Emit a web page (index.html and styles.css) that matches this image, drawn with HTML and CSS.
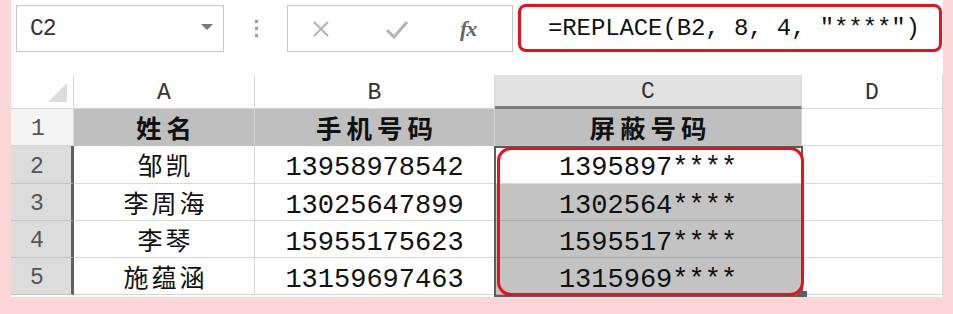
FILE: index.html
```html
<!DOCTYPE html>
<html lang="zh">
<head>
<meta charset="utf-8">
<link rel="stylesheet" href="styles.css">
</head>
<body>
<div class="panel">
  <div class="toolbar">
    <div class="namebox">
      <span class="name">C2</span>
      <span class="caret"></span>
    </div>
    <div class="dots"><i></i><i></i><i></i></div>
    <div class="btns">
      <svg class="ico" width="20" height="20" viewBox="0 0 20 20"><path d="M3 3 L17 17 M17 3 L3 17" stroke="#b4b4b4" stroke-width="2" fill="none"/></svg>
      <svg class="ico" width="24" height="22" viewBox="0 0 24 22"><path d="M2 11 L9 18 L22 3" stroke="#b4b4b4" stroke-width="3" fill="none"/></svg>
      <span class="fx">fx</span>
    </div>
    <div class="formula">=REPLACE(B2, 8, 4, ″****″)</div>
  </div>
  <div class="grid">
    <div class="corner"><span class="tri"></span></div>
    <div class="ch">A</div>
    <div class="ch">B</div>
    <div class="ch sel">C</div>
    <div class="ch">D</div>

    <div class="rh">1</div>
    <div class="c hd">姓名</div>
    <div class="c hd">手机号码</div>
    <div class="c hd">屏蔽号码</div>
    <div class="c"></div>

    <div class="rh rs">2</div>
    <div class="c">邹凯</div>
    <div class="c num">13958978542</div>
    <div class="c num">1395897****</div>
    <div class="c"></div>

    <div class="rh rs">3</div>
    <div class="c">李周海</div>
    <div class="c num">13025647899</div>
    <div class="c num gs">1302564****</div>
    <div class="c"></div>

    <div class="rh rs">4</div>
    <div class="c">李琴</div>
    <div class="c num">15955175623</div>
    <div class="c num gs">1595517****</div>
    <div class="c"></div>

    <div class="rh rs">5</div>
    <div class="c">施蕴涵</div>
    <div class="c num">13159697463</div>
    <div class="c num gs">1315969****</div>
    <div class="c"></div>

    <div class="selbox"></div>
    <div class="handle"></div>
    <div class="redbox"></div>
  </div>
</div>
</body>
</html>
```
FILE: styles.css
```css
* { box-sizing: border-box; }
html, body { margin: 0; padding: 0; }
body {
  width: 953px;
  height: 314px;
  background: #fcd5d6;
  overflow: hidden;
  font-family: "Liberation Mono", "Noto Sans CJK SC", monospace;
}
.panel {
  margin-left: 11px;
  width: 932px;
  height: 297px;
  background: #fff;
  overflow: hidden;
}
.toolbar {
  display: flex;
  align-items: flex-start;
  height: 75px;
  padding-top: 5px;
}
.namebox {
  margin-left: 5px;
  width: 208px;
  height: 47px;
  border: 1px solid #c6c6c6;
  display: flex;
  align-items: center;
  justify-content: space-between;
  padding: 0 10px 0 13px;
}
.name {
  font-size: 23px;
  color: #333;
  letter-spacing: -1px;
}
.caret {
  width: 0; height: 0;
  border-left: 6px solid transparent;
  border-right: 6px solid transparent;
  border-top: 6px solid #777;
  margin-top: -4px;
}
.dots {
  width: 63px;
  height: 47px;
  display: flex;
  flex-direction: column;
  align-items: center;
  justify-content: center;
  gap: 4px;
  padding-left: 1px;
}
.dots i {
  display: block;
  width: 3px;
  height: 3px;
  background: #9a9a9a;
}
.btns {
  width: 226px;
  height: 47px;
  border: 1px solid #c6c6c6;
  display: flex;
  align-items: center;
  padding-left: 23px;
}
.btns .ico:first-child { margin-right: 54px; }
.btns .ico:nth-child(2) { margin-right: 51px; margin-top: 2px; }
.fx {
  font-family: "Liberation Serif", serif;
  font-style: italic;
  font-weight: bold;
  font-size: 22px;
  color: #666;
  letter-spacing: -1px;
}
.formula {
  margin-left: 5px;
  width: 424px;
  height: 48px;
  margin-top: -1px;
  border: 3px solid #e5121c;
  border-radius: 8px;
  display: flex;
  align-items: center;
  padding-left: 27px;
  font-size: 24px;
  letter-spacing: -0.1px;
  color: #111;
  white-space: pre;
}
.grid {
  position: relative;
  display: grid;
  grid-template-columns: 63px 181px 240px 307px 141px;
  grid-template-rows: 34px 37px 38px 37px 37px 37px;
}
.grid > div { border-right: 1px solid #d6d6d6; border-bottom: 1px solid #d6d6d6; }
.corner {
  background: #fff;
  position: relative;
}
.tri {
  position: absolute;
  left: 37px;
  top: 8px;
  width: 0; height: 0;
  border-left: 19px solid transparent;
  border-bottom: 19px solid #dcdcdc;
}
.ch {
  display: flex;
  justify-content: center;
  align-items: center;
  font-size: 23px;
  color: #333;
  padding-top: 2px;
}
.ch.sel {
  background: #e1e1e1;
  border-bottom: 3px solid #7d7d7d !important;
}
.rh {
  display: flex;
  justify-content: center;
  align-items: center;
  font-size: 23px;
  color: #555;
  background: #f3f3f3;
  padding-right: 8px;
  padding-top: 4px;
}
.rh.rs {
  background: #dcdcdc;
  border-right: 3px solid #606060 !important;
  border-bottom-color: #c4c4c4 !important;
}
.c {
  display: flex;
  justify-content: center;
  align-items: center;
  font-family: "Noto Sans CJK SC", sans-serif;
  font-size: 25px;
  letter-spacing: 3px;
  padding-left: 3px;
  color: #111;
  line-height: 1;
}
.c.hd {
  background: #bfbfbf;
  font-weight: bold;
  font-size: 25.5px;
  letter-spacing: 5px;
  padding-left: 5px;
  border-bottom-color: #bfbfbf !important;
}
.c.num {
  font-family: "Liberation Mono", monospace;
  font-size: 27px;
  letter-spacing: 0;
  padding-left: 0;
  padding-top: 8px;
}
.c.gs { background: #c3c3c3; border-bottom-color: #a9a9a9 !important; }
.grid > .selbox {
  position: absolute;
  left: 483px;
  top: 71px;
  width: 309px;
  height: 151px;
  border: 2px solid #5d5d5d;
  pointer-events: none;
}
.grid > .handle {
  position: absolute;
  left: 786px;
  top: 216px;
  width: 10px;
  height: 10px;
  background: #5d5d5d;
  border: none;
}
.grid > .redbox {
  position: absolute;
  left: 486px;
  top: 72px;
  width: 307px;
  height: 149px;
  border: 3px solid #e5121c;
  border-radius: 14px;
}
```
